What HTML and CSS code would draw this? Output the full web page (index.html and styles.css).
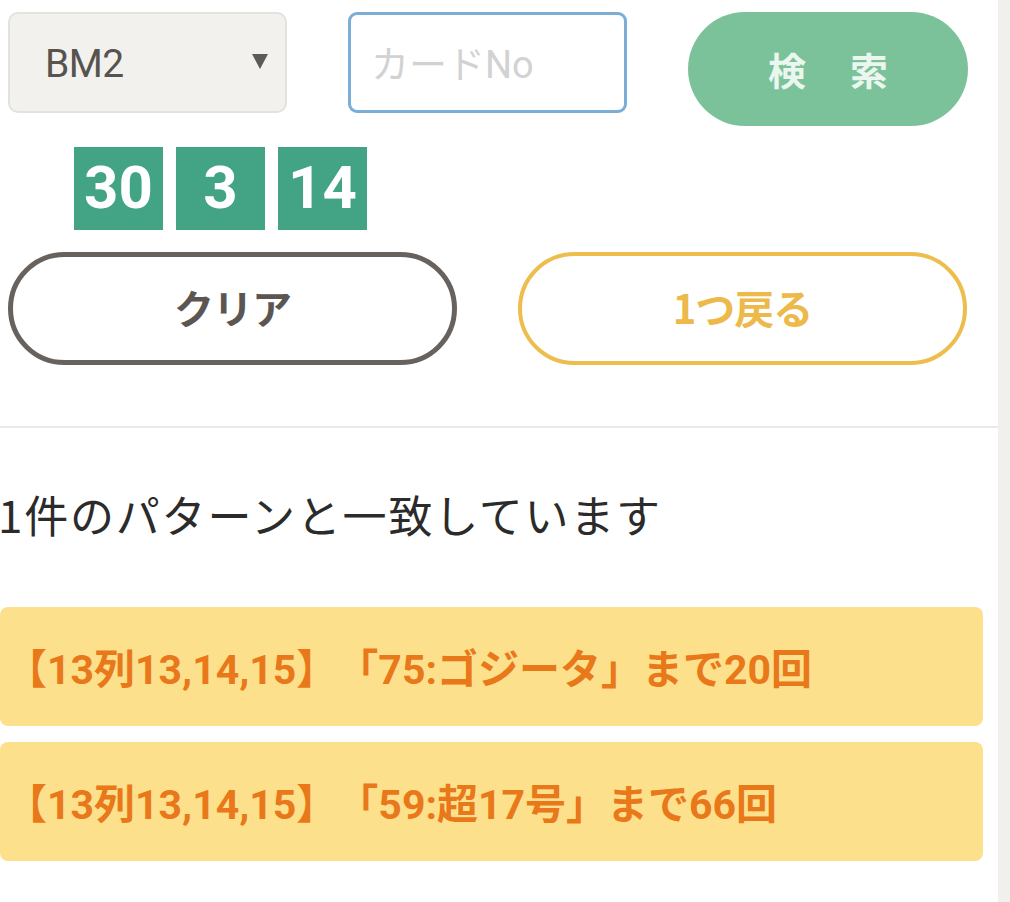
FILE: index.html
```html
<!DOCTYPE html>
<html lang="ja">
<head>
<meta charset="utf-8">
<link rel="stylesheet" href="styles.css">
</head>
<body>
<main class="page">
  <div class="row-search">
    <div class="select">
      <span class="select-value">BM2</span>
      <svg class="select-arrow" width="18" height="18" viewBox="0 0 18 18"><path d="M1 2 H17 L9 17 Z" fill="#5e5a55"/></svg>
    </div>
    <input class="card-input" type="text" placeholder="カードNo">
    <button class="btn-search">検　索</button>
  </div>
  <div class="row-nums">
    <div class="num">30</div>
    <div class="num">3</div>
    <div class="num">14</div>
  </div>
  <div class="row-actions">
    <button class="btn-outline btn-clear">クリア</button>
    <button class="btn-outline btn-back">1つ戻る</button>
  </div>
  <hr class="divider">
  <p class="result-count">1件のパターンと一致しています</p>
  <ul class="results">
    <li class="result-card">【13列13,14,15】「75:ゴジータ」まで20回</li>
    <li class="result-card">【13列13,14,15】「59:超17号」まで66回</li>
  </ul>
</main>
</body>
</html>
```

FILE: styles.css
```css
html, body {
  margin: 0;
  padding: 0;
}
body {
  background: #f1f0ec;
  font-family: Roboto, "Noto Sans CJK JP", sans-serif;
  overflow: hidden;
  text-spacing-trim: space-all;
}
.page {
  width: 998px;
  min-height: 902px;
  background: #ffffff;
  padding-top: 12px;
  box-sizing: border-box;
}
.row-search {
  display: flex;
  align-items: flex-start;
  gap: 61px;
  padding-left: 8px;
}
.select {
  width: 279px;
  height: 101px;
  box-sizing: border-box;
  background: #f2f1ee;
  border: 2px solid #e3e2de;
  border-radius: 10px;
  display: flex;
  align-items: center;
  justify-content: space-between;
  padding: 0 16px 0 35px;
}
.select-value {
  font-size: 39px;
  color: #57534e;
  letter-spacing: -0.5px;
  margin-top: 2px;
}
.select-arrow {
  margin-top: -4px;
}
.card-input {
  width: 279px;
  height: 101px;
  box-sizing: border-box;
  border: 3px solid #7aaed6;
  border-radius: 9px;
  padding: 4px 0 0 20px;
  margin: 0;
  font-family: Roboto, "Noto Sans CJK JP", sans-serif;
  font-size: 38px;
  color: #333;
  outline: none;
  background: #fff;
}
.card-input::placeholder {
  color: #d2d2d2;
}
.btn-search {
  width: 280px;
  height: 114px;
  border: none;
  border-radius: 57px;
  background: #7bc29b;
  color: #eaf6ee;
  font-family: "Noto Sans CJK JP", sans-serif;
  font-weight: 700;
  font-size: 38px;
  letter-spacing: 3px;
  padding: 0 0 2px 3px;
  margin: 0;
}
.row-nums {
  display: flex;
  gap: 13px;
  margin-top: 21px;
  padding-left: 74px;
}
.num {
  width: 89px;
  height: 83px;
  background: #43a385;
  color: #ffffff;
  font-family: Roboto, sans-serif;
  font-weight: 700;
  font-size: 60px;
  display: flex;
  align-items: center;
  justify-content: center;
  padding-bottom: 2px;
  box-sizing: border-box;
}
.row-actions {
  display: flex;
  gap: 61px;
  margin-top: 22px;
  padding-left: 8px;
}
.btn-outline {
  width: 449px;
  height: 113px;
  box-sizing: border-box;
  background: #fff;
  border-radius: 57px;
  font-family: "Noto Sans CJK JP", sans-serif;
  font-weight: 700;
  font-size: 40px;
  letter-spacing: -1px;
  padding: 0 0 4px 0;
  margin: 0;
}
.btn-clear {
  border: 5px solid #67625d;
  color: #5b5651;
}
.btn-back {
  border: 4px solid #edbd4e;
  color: #ecb94a;
}
.divider {
  margin: 61px 0 0 0;
  border: none;
  height: 2px;
  background: #ebeae6;
}
.result-count {
  margin: 56px 0 0 -2px;
  font-family: "Noto Sans CJK JP", sans-serif;
  font-size: 44px;
  line-height: 60px;
  color: #2b2b2b;
  letter-spacing: 1.8px;
}
.results {
  list-style: none;
  margin: 63px 0 0 0;
  padding: 0;
  width: 983px;
  display: flex;
  flex-direction: column;
  gap: 16px;
}
.result-card {
  height: 119px;
  box-sizing: border-box;
  background: #fde08c;
  border-radius: 8px;
  display: flex;
  align-items: center;
  padding: 0 0 2px 6px;
  font-family: Roboto, "Noto Sans CJK JP", sans-serif;
  font-weight: 700;
  font-size: 41px;
  color: #e8781a;
  letter-spacing: 0;
}
```
